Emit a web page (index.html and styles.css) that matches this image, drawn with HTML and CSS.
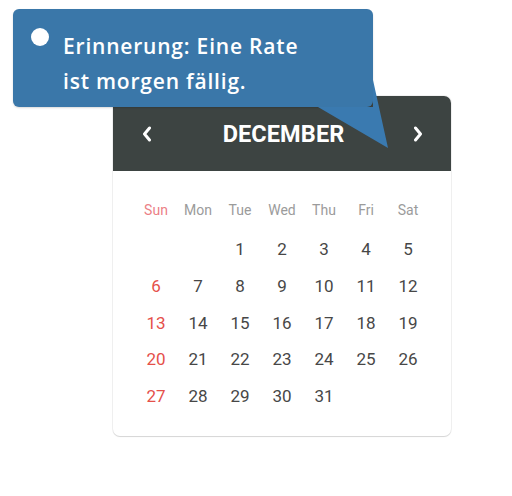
FILE: index.html
```html
<!DOCTYPE html>
<html lang="de">
<head>
<meta charset="utf-8">
<title>Kalender</title>
<link rel="stylesheet" href="styles.css">
</head>
<body>
<div class="stage">
  <div class="calendar">
    <div class="cal-header">
      <svg class="chev" width="10" height="16" viewBox="0 0 10 16"><polyline points="7.5,2 2.5,8 7.5,14" fill="none" stroke="#fff" stroke-width="3" stroke-linecap="round" stroke-linejoin="round"/></svg>
      <span class="month">DECEMBER</span>
      <svg class="chev" width="10" height="16" viewBox="0 0 10 16"><polyline points="2.5,2 7.5,8 2.5,14" fill="none" stroke="#fff" stroke-width="3" stroke-linecap="round" stroke-linejoin="round"/></svg>
    </div>
    <div class="cal-body">
      <div class="weekdays">
        <span class="sun">Sun</span><span>Mon</span><span>Tue</span><span>Wed</span><span>Thu</span><span>Fri</span><span>Sat</span>
      </div>
      <div class="days">
        <span></span><span></span><span>1</span><span>2</span><span>3</span><span>4</span><span>5</span>
        <span class="sun">6</span><span>7</span><span>8</span><span>9</span><span>10</span><span>11</span><span>12</span>
        <span class="sun">13</span><span>14</span><span>15</span><span>16</span><span>17</span><span>18</span><span>19</span>
        <span class="sun">20</span><span>21</span><span>22</span><span>23</span><span>24</span><span>25</span><span>26</span>
        <span class="sun">27</span><span>28</span><span>29</span><span>30</span><span>31</span>
      </div>
    </div>
  </div>

  <div class="tooltip">
    <span class="dot"></span>
    <p class="tip-text">Erinnerung: Eine Rate<br>ist morgen fällig.</p>
    <svg class="tail" width="80" height="80" viewBox="0 0 80 80"><polygon points="58,0 73,68 3,27 58,27" fill="#3a7ab0"/></svg>
  </div>
</div>
</body>
</html>
```

FILE: styles.css
```css
html, body {
  margin: 0;
  padding: 0;
  background: #ffffff;
}

.stage {
  position: relative;
  width: 512px;
  height: 496px;
  padding-top: 96px;
  padding-left: 113px;
  box-sizing: border-box;
}

.calendar {
  width: 338px;
  height: 340px;
  box-sizing: border-box;
  border-radius: 7px;
  background: #fff;
  box-shadow: 0 1px 1px rgba(0,0,0,0.12), 0 0 0 1px rgba(0,0,0,0.05);
  overflow: hidden;
  font-family: Roboto, "Liberation Sans", sans-serif;
}

.cal-header {
  height: 75px;
  background: #3d4442;
  display: flex;
  align-items: center;
  justify-content: space-between;
  padding: 0 28px 0 29px;
  box-sizing: border-box;
}

.chev {
  display: block;
}

.month {
  color: #fff;
  font-weight: 700;
  font-size: 23.5px;
  letter-spacing: 0.1px;
  margin-left: 2px;
}

.cal-body {
  padding: 29px 22px 0 22px;
}

.weekdays,
.days {
  display: grid;
  grid-template-columns: repeat(7, 42px);
  text-align: center;
}

.weekdays {
  font-size: 14px;
  line-height: 20px;
  color: #9b9b9b;
}

.weekdays .sun {
  color: #ec7f86;
}

.days {
  margin-top: 11px;
  grid-auto-rows: 36.75px;
  font-size: 17px;
  line-height: 36.75px;
  color: #474747;
}

.days .sun {
  color: #e5504a;
}

.tooltip {
  position: absolute;
  left: 13px;
  top: 9px;
  width: 360px;
  height: 98px;
  background: #3a77a9;
  border-radius: 6px;
  box-shadow: 0 1px 2px rgba(0,0,0,0.15);
}

.dot {
  position: absolute;
  left: 18px;
  top: 19px;
  width: 18px;
  height: 18px;
  border-radius: 50%;
  background: #fff;
}

.tip-text {
  margin: 0;
  padding: 20px 0 0 50px;
  color: #fff;
  font-family: "Open Sans", "Noto Sans", sans-serif;
  font-weight: 600;
  font-size: 21px;
  line-height: 35px;
  letter-spacing: 0.8px;
}

.tail {
  position: absolute;
  left: 302px;
  top: 71px;
  display: block;
}
```
